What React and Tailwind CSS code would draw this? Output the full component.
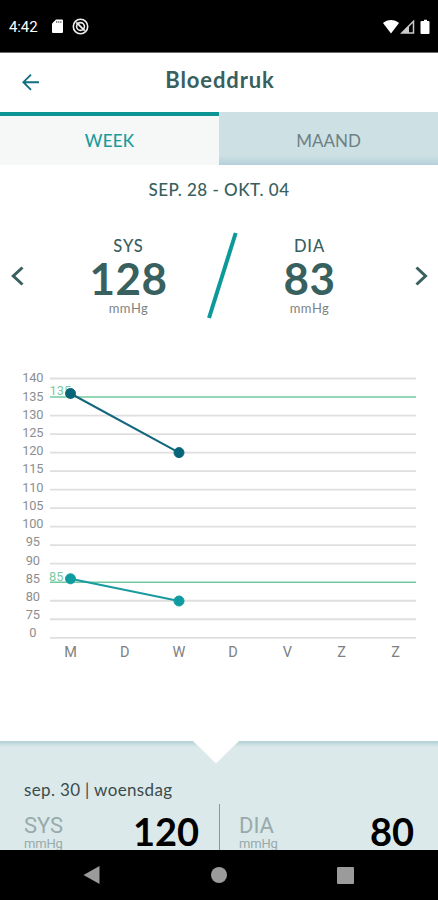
import React from "react";

const yLabels = [140, 135, 130, 125, 120, 115, 110, 105, 100, 95, 90, 85, 80, 75, 0];
const days = ["M", "D", "W", "D", "V", "Z", "Z"];

function StatusBar() {
  return (
    <div className="h-[52px] shrink-0 bg-black border-b border-[#6b6b6b] box-content flex items-center justify-between pl-[9px] pr-[7px] text-white">
      <div className="flex items-center">
        <span className="w-[42px] pt-[2px] font-['Roboto',sans-serif] text-[15px] tracking-[-0.1px]">4:42</span>
        <svg width="13" height="15" viewBox="0 0 12 15" className="mt-px">
          <path d="M4.5 0.5H10.5a1 1 0 0 1 1 1V13a1 1 0 0 1-1 1H1.5a1 1 0 0 1-1-1V4.5Z" fill="#fff" />
          <path d="M5.2 2v2M7.3 2v2M9.4 2v2" stroke="#555" strokeWidth="0.9" />
        </svg>
        <svg width="17" height="17" viewBox="0 0 17 17" className="ml-[8px]" fill="none" stroke="#eee">
          <circle cx="8.5" cy="8.5" r="7.2" strokeWidth="1.6" />
          <circle cx="8.5" cy="8.5" r="3.9" strokeWidth="1.6" />
          <path d="M4.3 4.3L12.7 12.7" strokeWidth="1.8" />
        </svg>
      </div>
      <svg width="48" height="16" viewBox="0 0 48 16" fill="#fff" className="mt-px">
        <path d="M0 4C4.500 0 11.500 0 16 4L8 14.500Z" />
        <path d="M30.500 2.200V14H18.800Z" fill="none" stroke="#ccc" strokeWidth="1.500" />
        <path d="M26 6.500V14H18.500Z" fill="#ccc" />
        <path d="M39.500 2h1.500V0.800h3V2H45.500a1 1 0 0 1 1 1V14a1 1 0 0 1-1 1H38.500a1 1 0 0 1-1-1V3a1 1 0 0 1 1-1Z" />
      </svg>
    </div>
  );
}

function Header() {
  return (
    <header className="h-[59px] shrink-0 flex items-center pl-[22px] pr-[38px]">
      <svg width="18" height="18" viewBox="0 0 18 18" fill="none" stroke="#126e80" strokeWidth="1.9" className="shrink-0 mb-[2px]">
        <path d="M17 9.2H1.5M9 1.6L1.4 9.2L9 16.8" />
      </svg>
      <h1 className="flex-1 text-center pb-[6px] text-[22px] leading-none font-bold tracking-[0.9px] text-[#38605e]">Bloeddruk</h1>
    </header>
  );
}

function Tabs() {
  return (
    <div className="h-[53px] shrink-0 flex text-[17px]">
      <div className="w-[219px] bg-[#f5f8f7] border-t-4 border-[#0d9494] flex items-center justify-center pt-px text-[#1b9b9b] font-medium tracking-[0.2px]">
        <span>WEEK</span>
      </div>
      <div className="flex-1 bg-[linear-gradient(#cde0e3_82%,#b5d0db)] flex items-center justify-center pt-[5px] text-[#6c8085]">
        <span>MAAND</span>
      </div>
    </div>
  );
}

function Average({ label, value }) {
  return (
    <div className="w-[110px] flex flex-col items-center text-[#38605e]">
      <span className="h-[20px] leading-[20px] text-[16.5px] font-medium tracking-[0.9px]">{label}</span>
      <span className="h-[44px] leading-[44px] text-[44px] font-bold tracking-[0.5px]">{value}</span>
      <span className="h-[17px] leading-[17px] text-[13px] tracking-[0.5px] text-[#7c8584]">mmHg</span>
    </div>
  );
}

function Averages() {
  return (
    <div className="h-[108px] shrink-0 flex items-center justify-between px-[10px]">
      <svg width="14" height="20" viewBox="0 0 14 20" fill="none" stroke="#38605e" strokeWidth="3">
        <path d="M12.5 1.5L3.3 10L12.5 18.5" />
      </svg>
      <div className="flex items-center">
        <Average label="SYS" value="128" />
        <svg width="71" height="88" viewBox="0 0 71 88" stroke="#0d9999" strokeWidth="4">
          <path d="M51.700 1L25 86" />
        </svg>
        <Average label="DIA" value="83" />
      </div>
      <svg width="14" height="20" viewBox="0 0 14 20" fill="none" stroke="#38605e" strokeWidth="3">
        <path d="M2.500 1.500L11.500 10L2.500 18.500" />
      </svg>
    </div>
  );
}

function Chart() {
  return (
    <svg width="438" height="320" viewBox="0 360 438 320" className="shrink-0 font-['Roboto',sans-serif]">
      {yLabels.map((v, i) => {
        const limit = v === 135 || v === 85;
        return (
          <g key={v}>
            <line x1="50" x2="416" y1={378.5 + i * 18.52} y2={378.5 + i * 18.52} stroke={limit ? "#72c9a0" : "#dfdfdf"} strokeWidth={limit ? 1.5 : 1.8} />
            <text x="32.8" y={382.3 + i * 18.22} textAnchor="middle" fontSize="12.8" letterSpacing="-0.1" fill="#8e8e8e">{v}</text>
          </g>
        );
      })}
      <text x="49.5" y="395.3" fontSize="12.8" fill="#7cc9a3">135</text>
      <text x="49" y="580.8" fontSize="12.8" fill="#7cc9a3">85</text>
      {days.map((d, i) => (
        <text key={i} x={70.5 + i * 54.2} y="657" textAnchor="middle" fontSize="14.5" fill="#808080">{d}</text>
      ))}
      <g stroke="#12677c" fill="#066579">
        <path d="M70.5 393.5L179 452.6" strokeWidth="2" />
        <circle cx="70.5" cy="393.5" r="5" />
        <circle cx="179" cy="452.6" r="5" />
      </g>
      <g stroke="#199ba0" fill="#0d9da1">
        <path d="M70.5 578.8L179 601" strokeWidth="2" />
        <circle cx="70.5" cy="578.8" r="5" />
        <circle cx="179" cy="601" r="5" />
      </g>
    </svg>
  );
}

function Reading({ label, value }) {
  return (
    <div className="flex-1 flex justify-between">
      <div className="pt-[11px] font-['Roboto',sans-serif] text-[#98aaaa]">
        <div className="h-[22px] leading-[22px] text-[22px]">{label}</div>
        <div className="h-[14px] leading-[14px] text-[13px] tracking-[-0.2px]">mmHg</div>
      </div>
      <span className="pt-[8px] leading-[38px] text-[38px] font-bold text-black">{value}</span>
    </div>
  );
}

function DayPanel() {
  return (
    <section className="relative flex-1 overflow-hidden bg-[linear-gradient(#b1d1d4,#dbe9ea_6px)] pt-[38px]">
      <svg width="46" height="24" viewBox="0 0 46 24" className="absolute top-0 left-[193px]">
        <path d="M0 0H46L23 22.500Z" fill="#fff" />
      </svg>
      <p className="h-[25px] pl-[24px] leading-[21px] text-[17px] tracking-[0.35px] text-[#3c4b4c]">sep. 30 | woensdag</p>
      <div className="h-[60px] flex pl-[24px] pr-[24px]">
        <div className="w-[175px] flex">
          <Reading label="SYS" value="120" />
        </div>
        <div className="w-px mx-[19.5px] bg-[#899899]" />
        <Reading label="DIA" value="80" />
      </div>
    </section>
  );
}

function NavBar() {
  return (
    <nav className="h-[50px] shrink-0 bg-black flex items-center justify-between pl-[83px] pr-[84px]">
      <svg width="17" height="20" viewBox="0 0 17 20">
        <path d="M16.5 1V19L0.5 10Z" fill="#9b9b9b" />
      </svg>
      <div className="size-[16px] rounded-full bg-[#9b9b9b]" />
      <div className="size-[17px] rounded-[1px] bg-[#9b9b9b]" />
    </nav>
  );
}

export default function App() {
  return (
    <div className="w-[438px] h-[900px] overflow-hidden flex flex-col bg-white font-['Lato','Noto_Sans',sans-serif]">
      <StatusBar />
      <Header />
      <Tabs />
      <div className="h-[57px] shrink-0 pt-[14px] text-center text-[17px] leading-[22px] font-medium tracking-[0.5px] text-[#38605e]">
        SEP. 28 - OKT. 04
      </div>
      <Averages />
      <div className="h-[30px] shrink-0" />
      <Chart />
      <div className="h-[61px] shrink-0" />
      <DayPanel />
      <NavBar />
    </div>
  );
}
